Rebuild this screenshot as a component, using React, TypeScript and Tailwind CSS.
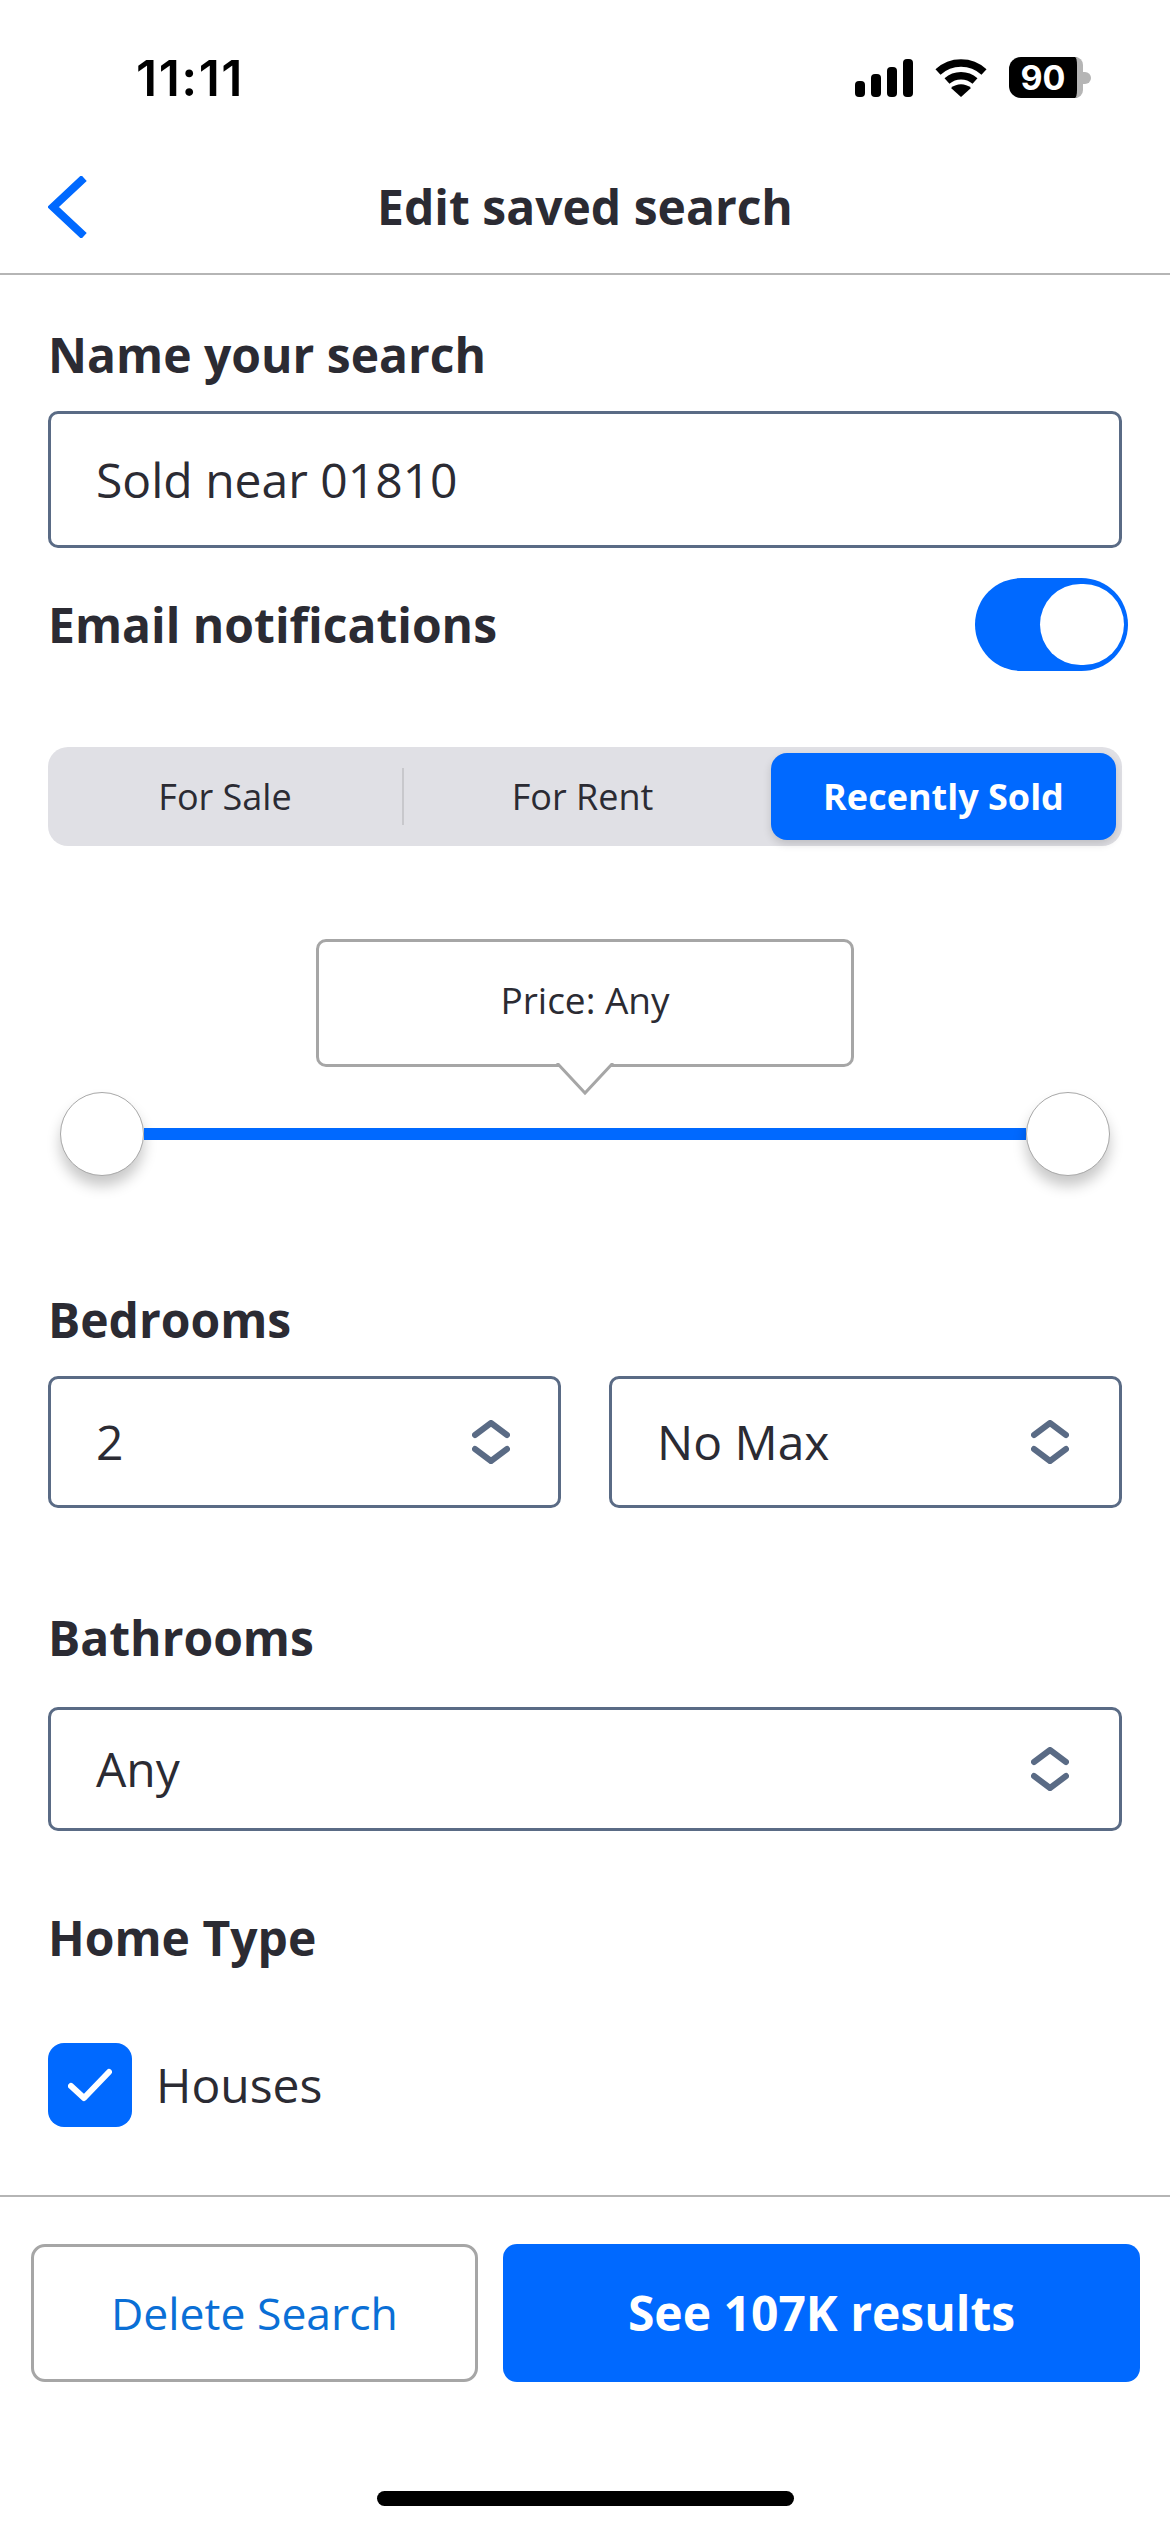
import React from 'react'

const Updown = () => (
    <svg width="38" height="44" viewBox="0 0 38 44" fill="none" stroke="#5a6b85" strokeWidth="6" strokeLinecap="round" strokeLinejoin="round">
        <path d="M3 15 L19 3 L35 15" />
        <path d="M3 29 L19 41 L35 29" />
    </svg>
)

const SelectBox = ({ value, className }: { value: string; className: string }) => (
    <div className={`flex items-center justify-between rounded-[10px] border-[3px] border-[#5a6b85] bg-white text-[48px] text-[#2b2b33] ${className}`}>
        <span>{value}</span>
        <Updown />
    </div>
)

const Label = ({ children, className }: { children: React.ReactNode; className: string }) => (
    <div className={`h-[64px] text-[48px] leading-[64px] font-bold text-[#2b2b33] ${className}`}>{children}</div>
)

const Thumb = () => (
    <div className="h-[84px] w-[84px] shrink-0 rounded-full border border-[#a8a8a8] bg-white shadow-[0_10px_14px_rgba(0,0,0,0.22)]" />
)

const App: React.FC = () => {
    return (
        <div className="flex h-[2532px] w-[1170px] flex-col overflow-hidden bg-white font-['Open_Sans',sans-serif]">
            <div className="flex h-[141px] shrink-0 items-start justify-between pt-[50px] pr-[79px] pl-[136px]">
                <span className="font-['Inter',sans-serif] text-[50px] leading-[56px] font-semibold tracking-[1.5px] text-black">11:11</span>
                <div className="flex items-center pt-[7px]">
                    <svg width="58" height="38" viewBox="0 0 58 38" fill="black">
                        <rect x="0" y="22" width="10" height="16" rx="4" />
                        <rect x="16" y="15" width="10" height="23" rx="4" />
                        <rect x="32" y="8" width="10" height="30" rx="4" />
                        <rect x="48" y="0" width="10" height="38" rx="4" />
                    </svg>
                    <svg className="ml-[22px]" width="52" height="38" viewBox="0 0 52 38" fill="none" stroke="black" strokeWidth="7.5">
                        <path d="M3 13 C16 1 36 1 49 13" />
                        <path d="M12 22 C20 15 32 15 40 22" />
                        <path d="M26 38 L16 29 C22 24 30 24 36 29 Z" fill="black" stroke="none" />
                    </svg>
                    <div className="ml-[22px] flex items-center">
                        <div className="flex h-[41px] w-[74px] items-center justify-center rounded-l-[12px] rounded-r-[8px] border-r-[6px] border-[#b5b5b5] bg-black font-['Inter',sans-serif] text-[34px] leading-none font-bold text-white">
                            90
                        </div>
                        <div className="h-[12px] w-[8px] rounded-r-full bg-[#b5b5b5]" />
                    </div>
                </div>
            </div>

            <div className="grid h-[134px] shrink-0 grid-cols-[1fr_auto_1fr] items-center border-b-2 border-[#b5b5b5]">
                <svg className="ml-[48px]" width="40" height="62" viewBox="0 0 40 62" fill="none" stroke="#0069ff" strokeWidth="8">
                    <path d="M36 2 L5 31 L36 60" />
                </svg>
                <div className="text-[48px] font-bold text-[#2b2b33]">Edit saved search</div>
                <div />
            </div>

            <div className="flex flex-col px-[48px]">
                <Label className="mt-[48px]">Name your search</Label>
                <div className="mt-[24px] flex h-[137px] items-center rounded-[10px] border-[3px] border-[#5a6b85] pl-[45px] text-[48px] text-[#2b2b33]">
                    Sold near 01810
                </div>

                <div className="mt-[30px] -mr-[6px] flex h-[93px] items-center justify-between">
                    <div className="text-[48px] font-bold text-[#2b2b33]">Email notifications</div>
                    <div className="flex h-[93px] w-[153px] items-center justify-end rounded-full bg-[#0069ff] pr-[4px]">
                        <div className="h-[81px] w-[84px] rounded-full bg-white" />
                    </div>
                </div>

                <div className="mt-[76px] flex h-[99px] items-center rounded-[20px] bg-[#e0e0e5] pr-[6px] text-[36px] text-[#2b2b33]">
                    <div className="flex h-[57px] w-[356px] items-center justify-center border-r-2 border-[#c8c8cc]">For Sale</div>
                    <div className="flex w-[367px] items-center justify-center pr-[10px]">For Rent</div>
                    <div className="flex h-[87px] w-[345px] items-center justify-center rounded-[16px] bg-[#0069ff] font-bold text-white shadow-[0_4px_8px_rgba(0,0,0,0.15)]">
                        Recently Sold
                    </div>
                </div>

                <div className="relative mx-auto mt-[93px] flex h-[128px] w-[538px] items-center justify-center rounded-[10px] border-[3px] border-[#a6a6a6] bg-white pb-[6px] text-[37px] text-[#2b2b33]">
                    Price: Any
                    <svg className="absolute top-[121px] left-[235px]" width="62" height="34" viewBox="0 0 62 34" fill="white" stroke="none">
                        <path d="M3 0 L31 30 L59 0 Z" />
                        <path d="M3 0 L31 30 L59 0" fill="none" stroke="#a6a6a6" strokeWidth="3" />
                    </svg>
                </div>

                <div className="mt-[25px] flex items-center px-[12px]">
                    <Thumb />
                    <div className="h-[12px] flex-1 bg-[#0069ff]" />
                    <Thumb />
                </div>

                <Label className="mt-[112px]">Bedrooms</Label>
                <div className="mt-[24px] flex justify-between">
                    <SelectBox value="2" className="h-[132px] w-[513px] pr-[48px] pl-[45px]" />
                    <SelectBox value="No Max" className="h-[132px] w-[513px] pr-[50px] pl-[45px]" />
                </div>

                <Label className="mt-[98px]">Bathrooms</Label>
                <SelectBox value="Any" className="mt-[37px] h-[124px] pr-[50px] pl-[45px]" />

                <Label className="mt-[75px]">Home Type</Label>
                <div className="mt-[73px] flex items-center">
                    <div className="flex h-[84px] w-[84px] items-center justify-center rounded-[16px] bg-[#0069ff]">
                        <svg width="44" height="34" viewBox="0 0 44 34" fill="none" stroke="white" strokeWidth="6" strokeLinecap="round" strokeLinejoin="round">
                            <path d="M3 18 L16 30 L41 4" />
                        </svg>
                    </div>
                    <span className="ml-[24px] text-[48px] text-[#2b2b33]">Houses</span>
                </div>
            </div>

            <div className="mt-[68px] flex border-t-2 border-[#b5b5b5] pt-[47px] pr-[30px] pl-[31px]">
                <div className="flex h-[138px] w-[447px] items-center justify-center rounded-[14px] border-[3px] border-[#a6a6a6] text-[44.5px] text-[#0a6fd6]">
                    Delete Search
                </div>
                <div className="ml-[25px] flex h-[138px] flex-1 items-center justify-center rounded-[14px] bg-[#0069ff] text-[48px] font-bold text-white">
                    See 107K results
                </div>
            </div>

            <div className="mx-auto mt-[109px] h-[15px] w-[417px] rounded-full bg-black" />
        </div>
    )
}

export default App
